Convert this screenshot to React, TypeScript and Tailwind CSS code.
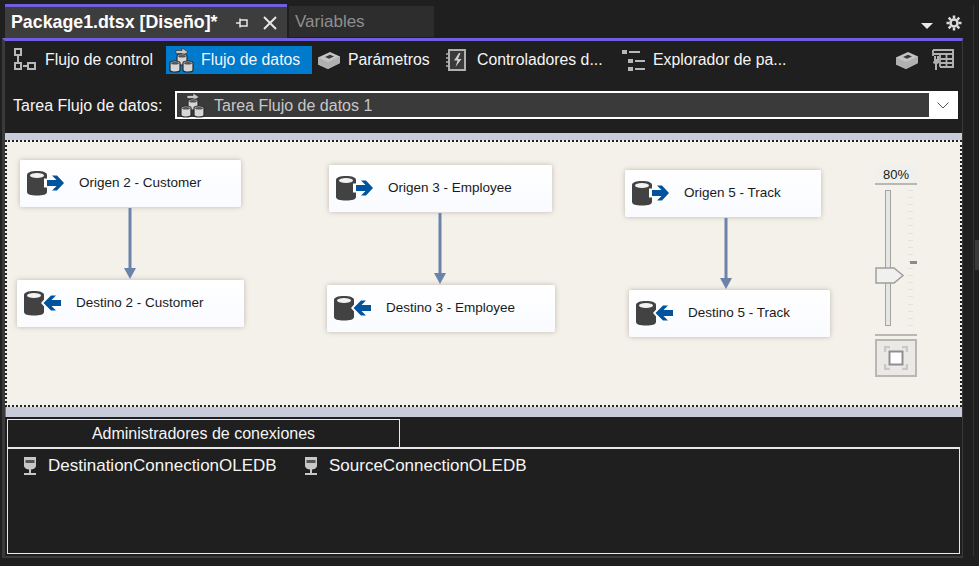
import React from 'react';

const SANS = "font-['Liberation_Sans',Arial,sans-serif]";

const Cylinder = () => (
  <>
    <path d="M0 4C0 1.500 4 0 10 0s10 1.500 10 4v17c0 2.500-4 3.500-10 3.500S0 23.500 0 21Z" fill="#424242" />
    <ellipse cx="10" cy="4.500" rx="7" ry="2.500" fill="#f2f2f2" />
  </>
);

const SourceIcon = () => (
  <svg width="40" height="26" viewBox="0 0 40 26" className="shrink-0">
    <Cylinder />
    <path d="M17 7.500h9L23 3h8l8 9-8 9h-8l3-4.500h-9Z" fill="#fff" />
    <path d="M20 9h9.500L25 4.500h5L37 12l-7 7.500h-5L29.500 15H20Z" fill="#00539c" />
  </svg>
);

const DestIcon = () => (
  <svg width="40" height="26" viewBox="0 0 40 26" className="shrink-0">
    <Cylinder />
    <path d="M39 7.500H30L33 3h-8l-8 9 8 9h8l-3-4.500h9Z" fill="#fff" />
    <path d="M37 9h-9.500L32 4.500h-5L19.500 12l7.500 7.500h5L27.500 15H37Z" fill="#00539c" />
  </svg>
);

const ControlFlowIcon = () => (
  <svg width="26" height="26" viewBox="0 0 26 26" className="shrink-0" fill="none" stroke="#b8b8b8" strokeWidth="2">
    <rect x="3" y="2" width="6" height="6" />
    <path d="M6 9v6" />
    <rect x="3" y="16" width="6" height="6" />
    <path d="M11 19h4" />
    <rect x="16" y="16" width="7" height="6" />
  </svg>
);

const MiniCyl = ({ x, y }: { x: number; y: number }) => (
  <g transform={`translate(${x} ${y})`}>
    <path d="M0 2c0-1.200 2.200-2 5-2s5 .8 5 2v7c0 1.200-2.200 2-5 2s-5-.8-5-2Z" fill="#d6d6d6" stroke="#2a2a2a" strokeWidth="1.200" />
    <ellipse cx="5" cy="2.200" rx="4" ry="1.300" fill="#555" />
  </g>
);

const DataFlowIcon = () => (
  <svg width="26" height="26" viewBox="0 0 26 26" className="shrink-0">
    <path d="M7 3.500h6V1l6 4-6 4V6.500H7Z" fill="#c8c8c8" stroke="#2a2a2a" strokeWidth=".6" />
    <MiniCyl x={8} y={7} />
    <MiniCyl x={1} y={14} />
    <MiniCyl x={14} y={14} />
  </svg>
);

const BrickIcon = () => (
  <svg width="24" height="22" viewBox="0 0 24 22" className="shrink-0">
    <path d="M1 8.500L13 3l10 4.500v6.500L11 20 1 15.500Z" fill="#c4c4c4" />
    <path d="M1 8.500L11 13l12-5.500v6.500L11 20 1 15.500Z" fill="#b0b0b0" />
    <path d="M8 8l5-2.200 4 1.800-5 2.200Z" fill="#3a3a3a" />
  </svg>
);

const ControllerIcon = () => (
  <svg width="22" height="24" viewBox="0 0 22 24" className="shrink-0">
    <rect x="3" y="2" width="16" height="20" fill="#3a3a3a" stroke="#b0b0b0" strokeWidth="2" />
    <path d="M0 6h4M0 10h4M0 14h4M0 18h4" stroke="#b0b0b0" strokeWidth="1.500" />
    <path d="M13 5L8 12.500h3.500L9.500 19l6-8H12l2.500-6Z" fill="#d0d0d0" />
  </svg>
);

const ExplorerIcon = () => (
  <svg width="24" height="26" viewBox="0 0 24 26" className="shrink-0" fill="#b8b8b8">
    <rect x="0" y="3" width="5" height="4" />
    <rect x="7" y="4" width="11" height="2" />
    <rect x="6" y="12" width="5" height="4" />
    <rect x="13" y="13" width="10" height="2" />
    <rect x="6" y="20" width="5" height="4" />
    <rect x="13" y="21" width="10" height="2" />
  </svg>
);

const GridIcon = () => (
  <svg width="22" height="22" viewBox="0 0 22 22" className="shrink-0">
    <path d="M1 1h20v17H8" fill="none" stroke="#b0b0b0" strokeWidth="2" />
    <path d="M1 1v6M1 5h20M8 5v13M14.500 5v13M8 10h13M8 14h13" fill="none" stroke="#b0b0b0" strokeWidth="1.800" />
    <path d="M2 7v5l-1 1v1l2 1v6h2v-6l2-1V7H5v3H4V7Z" fill="#b0b0b0" />
  </svg>
);

const ConnIcon = () => (
  <svg width="14" height="20" viewBox="0 0 14 20" className="shrink-0">
    <path d="M1 1h12v8.500c0 2.500-2.500 4-6 4s-6-1.500-6-4Z" fill="#c8c8c8" />
    <rect x="2.500" y="4" width="9" height="3" fill="#555" />
    <rect x="6" y="13" width="2" height="4" fill="#c8c8c8" />
    <rect x="1" y="17" width="12" height="2" fill="#c8c8c8" />
  </svg>
);

const FitIcon = () => (
  <div className="w-[42px] h-[38px] border-2 border-[#b9b7b1] bg-[#eae9e5] flex items-center justify-center">
    <svg width="24" height="24" viewBox="0 0 24 24" fill="none">
      <path d="M1 6V1h5M18 1h5v5M23 18v5h-5M6 23H1v-5" stroke="#c9c8c4" strokeWidth="2.500" />
      <rect x="5.500" y="5.500" width="13" height="13" fill="#fff" stroke="#8f8f8f" strokeWidth="2" />
    </svg>
  </div>
);

interface NodeProps {
  x: number;
  y: number;
  w: number;
  label: string;
  kind: 'src' | 'dst';
}

const NODES: NodeProps[] = [
  { x: 20, y: 160, w: 221, label: 'Origen 2 - Customer', kind: 'src' },
  { x: 17, y: 280, w: 227, label: 'Destino 2 - Customer', kind: 'dst' },
  { x: 329, y: 165, w: 223, label: 'Origen 3 - Employee', kind: 'src' },
  { x: 327, y: 285, w: 228, label: 'Destino 3 - Employee', kind: 'dst' },
  { x: 625, y: 170, w: 196, label: 'Origen 5 - Track', kind: 'src' },
  { x: 629, y: 290, w: 201, label: 'Destino 5 - Track', kind: 'dst' },
];

const ARROWS = [
  { x: 130, y: 208 },
  { x: 440, y: 213 },
  { x: 726, y: 218 },
];

const TOOLBAR = [
  { label: 'Flujo de control', icon: <ControlFlowIcon />, cls: 'w-[161px] pl-[7px] gap-[7px]' },
  { label: 'Flujo de datos', icon: <DataFlowIcon />, cls: 'w-[146px] pl-[3px] gap-[6px] bg-[#007acc]' },
  { label: 'Parámetros', icon: <BrickIcon />, cls: 'w-[134px] pl-[5px] gap-[7px]' },
  { label: 'Controladores d...', icon: <ControllerIcon />, cls: 'w-[176px] gap-[9px]' },
  { label: 'Explorador de pa...', icon: <ExplorerIcon />, cls: 'w-[170px] gap-[7px]' },
];

export default function App() {
  return (
    <div className={`w-[979px] h-[566px] overflow-hidden bg-[#1f1f1f] text-[16px] flex ${SANS}`}>
      <div className="w-[973px] shrink-0">
        {/* pestañas */}
        <div className="h-[38px] pl-[5px] pr-[11px] flex items-start">
          <div className="mt-[4px] w-[282px] h-[34px] border-t-[3px] border-[#6f5fe0] bg-[#3d3d3d] flex items-center pl-[6px] text-white font-bold text-[17.8px]">
            <span className="whitespace-nowrap">Package1.dtsx [Diseño]*</span>
            <svg width="14" height="14" viewBox="0 0 14 14" className="ml-[17px] shrink-0" fill="none" stroke="#e6e6e6" strokeWidth="1.500">
              <path d="M1 7h4M5 2.500v9M5 4h7v6H5" />
            </svg>
            <svg width="14" height="14" viewBox="0 0 14 14" className="ml-[14px] shrink-0" fill="none" stroke="#e6e6e6" strokeWidth="2">
              <path d="M1 1l12 12M13 1L1 13" />
            </svg>
          </div>
          <div className="ml-[2px] mt-[6px] w-[145px] h-[31px] bg-[#2d2d2d] flex items-center pl-[6px] text-[#8f8f8f] text-[17px]">
            Variables
          </div>
          <div className="ml-auto mt-[15px] flex items-center gap-[13px]">
            <div className="w-0 h-0 border-l-[6px] border-r-[6px] border-t-[6px] border-l-transparent border-r-transparent border-t-[#e8e8e8] mt-[5px]" />
            <svg width="16" height="16" viewBox="0 0 16 16" fill="none" stroke="#dcdcdc">
              <circle cx="8" cy="8" r="3.500" strokeWidth="2.500" />
              <path d="M8 0.500v3M8 12.500v3M.5 8h3M12.500 8h3M2.700 2.700l2.100 2.100M11.200 11.200l2.100 2.100M13.300 2.700l-2.100 2.100M4.800 11.200l-2.100 2.100" strokeWidth="2.500" />
            </svg>
          </div>
        </div>

        {/* cuerpo del diseñador */}
        <div className="w-[961px] h-[520px] ml-[2px] border-l-[3px] border-r border-b-2 border-t-[3px] border-[#3a3a3a] border-t-[#6f5fe0]">
          <div className="h-[34px] flex items-start pt-[5px] text-[#f5f5f5] text-[15.8px]">
            {TOOLBAR.map((t) => (
              <div key={t.label} className={`h-[28px] flex items-center shrink-0 whitespace-nowrap ${t.cls}`}>
                {t.icon}
                <span>{t.label}</span>
              </div>
            ))}
            <div className="ml-auto pr-[8px] h-[28px] flex items-center gap-[13px]">
              <BrickIcon />
              <GridIcon />
            </div>
          </div>

          <div className="h-[58px] flex items-start pl-[8px] pr-[4px] pt-[16px] text-[#f5f5f5]">
            <span className="w-[162px] h-[29px] flex items-center">Tarea Flujo de datos:</span>
            <div className="flex-1 h-[28px] border-2 border-white bg-[#3a3a3a] flex items-center">
              <div className="pl-[3px] flex items-center gap-[8px] flex-1 text-[#c8c8c8]">
                <DataFlowIcon />
                <span className="mt-px">Tarea Flujo de datos 1</span>
              </div>
              <div className="w-[27px] h-full bg-white flex items-center justify-center">
                <svg width="12" height="7" viewBox="0 0 12 7" fill="none" stroke="#555" strokeWidth="1">
                  <path d="M.5.5L6 6 11.500.5" />
                </svg>
              </div>
            </div>
          </div>

          <div className="h-[7px] bg-[#c8ccda]" />
          <div className="relative h-[267px] bg-[#f4f1ea] border-2 border-dotted border-[#222]">
            {NODES.map((n) => (
              <div
                key={n.label}
                className="absolute h-[47px] bg-linear-to-b from-white to-[#f9fbff] rounded-[2px] shadow-[0_0_5px_rgba(90,80,60,0.35)] text-[13.5px] text-[#1a1a1a] whitespace-nowrap"
                style={{ left: n.x - 7, top: n.y - 142, width: n.w }}
              >
                <div className="absolute left-[7px] top-[11px]">
                  {n.kind === 'src' ? <SourceIcon /> : <DestIcon />}
                </div>
                <span className="absolute left-[59px] top-[13px]">{n.label}</span>
              </div>
            ))}
            {ARROWS.map((a) => (
              <svg
                key={a.x}
                width="14"
                height="72"
                viewBox="0 0 14 72"
                className="absolute"
                style={{ left: a.x - 14, top: a.y - 142 }}
              >
                <rect x="5.500" y="0" width="3" height="62" fill="#6b83ab" />
                <path d="M1 60h12L7 71Z" fill="#6b83ab" />
              </svg>
            ))}

            {/* control de zoom */}
            <div className="absolute left-[868px] top-[24px] w-[42px] flex flex-col items-center">
              <div className="w-full h-[19px] bg-[#f0f0ec] border-b-2 border-[#b9b7b1] text-[13px] text-[#1a1a1a] flex items-center justify-center">
                80%
              </div>
              <div className="relative w-full h-[136px] mt-[5px]">
                <div className="absolute left-[10px] top-0 w-[6px] h-full bg-[#e6e6e4] border border-[#a3a3a3]" />
                <div className="absolute left-[33px] top-0 h-full w-[5px] flex flex-col justify-between">
                  {Array.from({ length: 20 }).map((_, i) => (
                    <div key={i} className="h-px bg-[#e4e2dc]" />
                  ))}
                </div>
                <div className="absolute left-[35px] top-[71px] w-[7px] h-[3px] bg-[#8a8a8a]" />
                <svg width="30" height="18" viewBox="0 0 30 18" className="absolute left-0 top-[77px]">
                  <path d="M1 1h18l9 7.500-9 7.500H1Z" fill="#f0f0ee" stroke="#9e9e9e" strokeWidth="1.500" />
                </svg>
              </div>
              <div className="w-full h-[2px] bg-[#b9b7b1] mt-[8px] mb-[3px]" />
              <FitIcon />
            </div>
          </div>
          <div className="h-[10px] bg-[#c8ccda] border-l border-[#777]" />

          {/* administradores de conexiones */}
          <div className="pl-[2px] pr-[2px] pt-[2px] text-[#f5f5f5]">
            <div className="w-[393px] h-[28px] border border-b-0 border-[#e8e8e8] flex items-center justify-center">
              Administradores de conexiones
            </div>
            <div className="h-[107px] border border-t-2 border-[#e8e8e8] flex items-start pl-[15px] pt-[4px] text-[17px]">
              <div className="flex items-center gap-[11px] w-[272px]">
                <ConnIcon />
                <span>DestinationConnectionOLEDB</span>
              </div>
              <div className="flex items-center gap-[11px] ml-[9px]">
                <ConnIcon />
                <span>SourceConnectionOLEDB</span>
              </div>
            </div>
          </div>
        </div>
      </div>

      {/* barra de desplazamiento de la ventana */}
      <div className="flex-1 mt-[5px] mb-[10px] border-l border-[#333] pl-[1px] pt-[235px]">
        <div className="w-full h-[30px] bg-[#3a3a3a]" />
      </div>
    </div>
  );
}
